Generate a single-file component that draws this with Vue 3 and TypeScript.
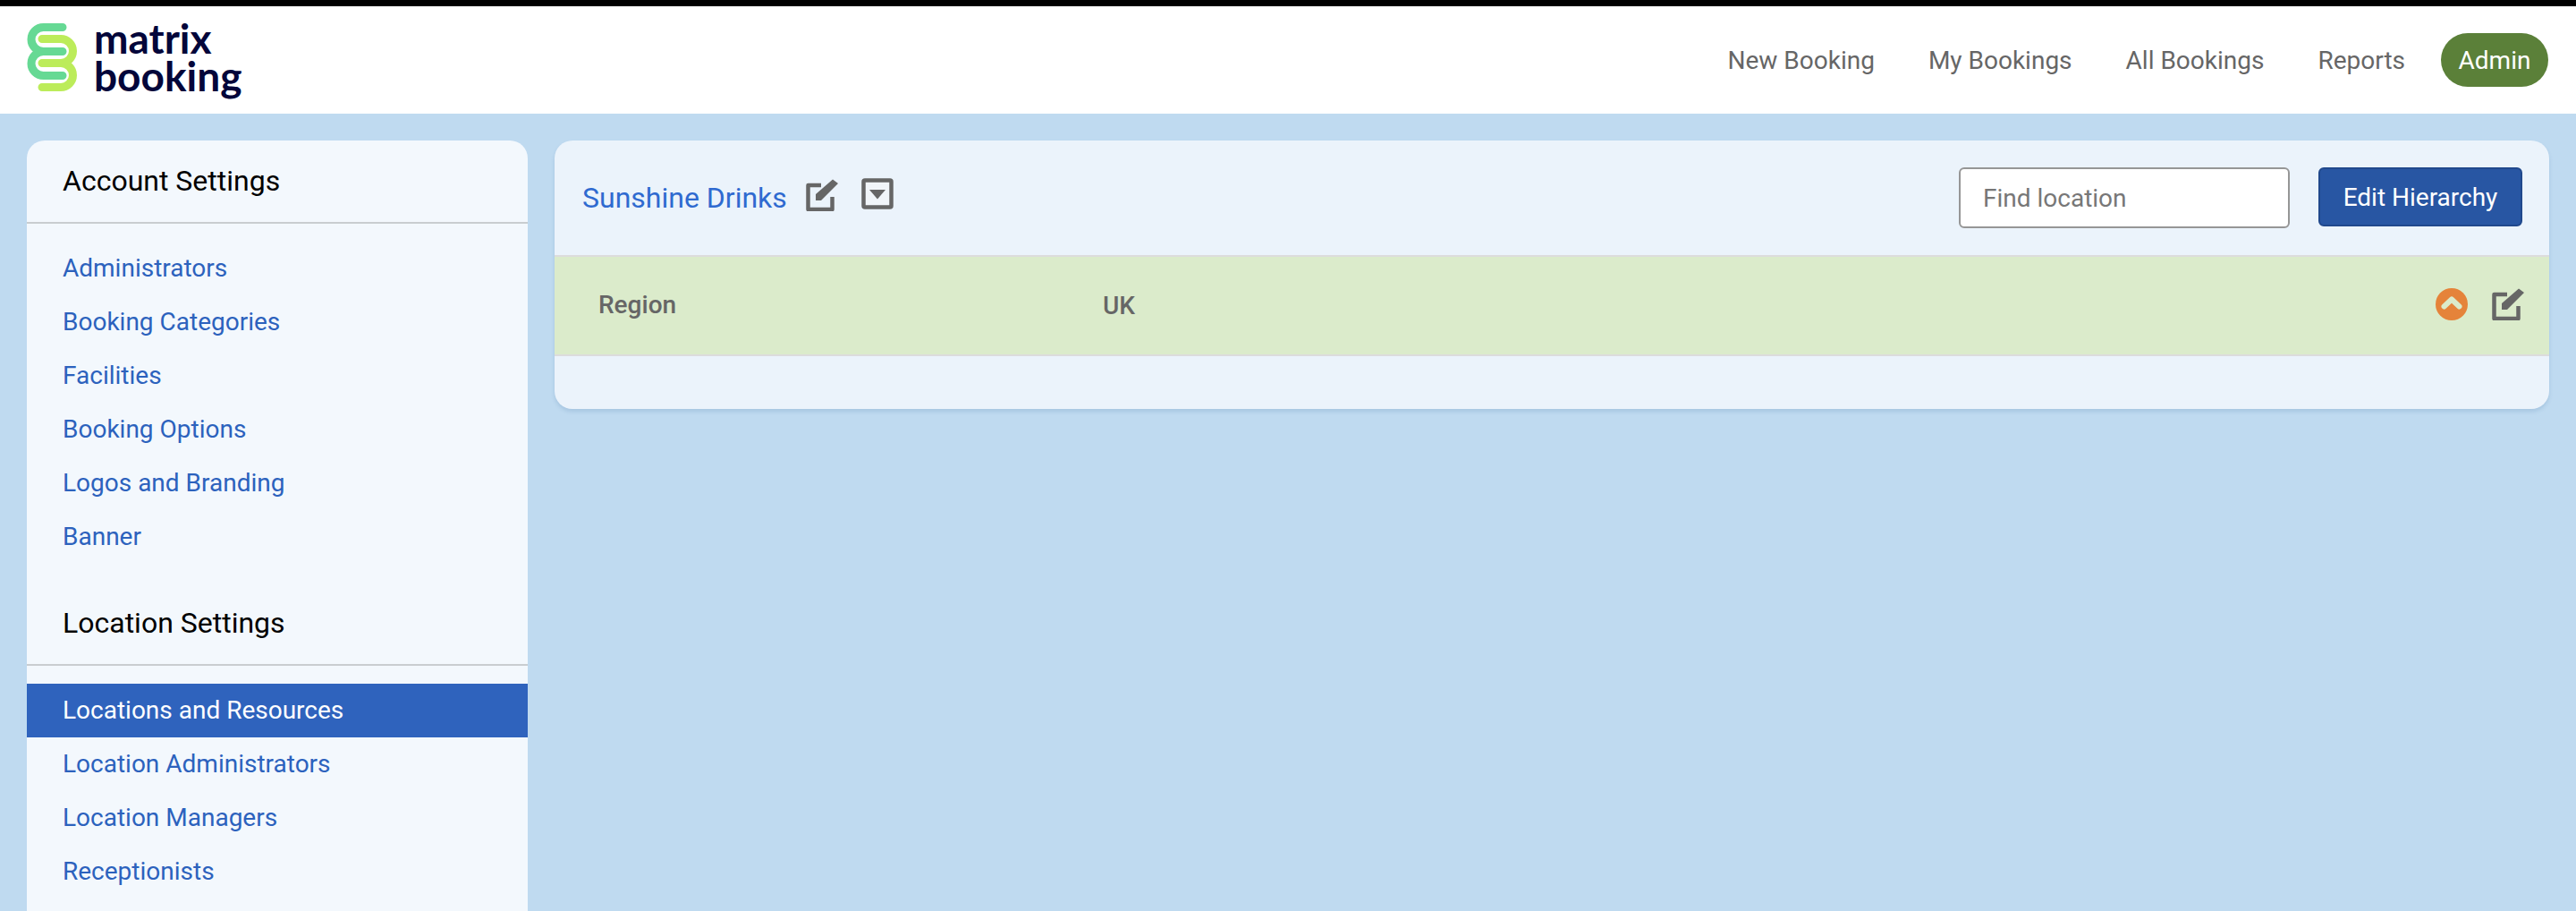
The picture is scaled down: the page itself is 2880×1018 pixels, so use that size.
<script setup lang="ts">
const navItems: string[] = ['New Booking', 'My Bookings', 'All Bookings', 'Reports']
const accountLinks: string[] = ['Administrators', 'Booking Categories', 'Facilities', 'Booking Options', 'Logos and Branding', 'Banner']
const locationLinks: string[] = ['Locations and Resources', 'Location Administrators', 'Location Managers', 'Receptionists', 'Security Groups']
</script>

<template>
  <div class="page">
    <header class="topbar">
      <div class="brand">
        <svg class="mark" width="62" height="80" viewBox="28 26 62 80" fill="none" stroke-width="9" stroke-linecap="round">
          <path stroke="#bcec5a" d="M47 45.5H68a13.5 13.5 0 0 1 0 27H47M68 72.5a13.5 13.5 0 0 1 0 27H47" />
          <path stroke="#66d994" d="M70 32.5H48.5a13.5 13.5 0 0 0 0 27H70M48.5 59.5a13.5 13.5 0 0 0 0 27H70" />
        </svg>
        <div class="wordmark"><span>matrix</span><span>booking</span></div>
      </div>
      <nav class="nav">
        <a v-for="item in navItems" :key="item" class="nav-link">{{ item }}</a>
        <a class="nav-pill">Admin</a>
      </nav>
    </header>

    <div class="content">
      <aside class="sidebar">
        <section class="group">
          <h2 class="group-title">Account Settings</h2>
          <ul class="links">
            <li v-for="l in accountLinks" :key="l" class="link">{{ l }}</li>
          </ul>
        </section>
        <section class="group">
          <h2 class="group-title">Location Settings</h2>
          <ul class="links">
            <li v-for="(l, i) in locationLinks" :key="l" class="link" :class="{ active: i === 0 }">{{ l }}</li>
          </ul>
        </section>
      </aside>

      <main class="panel">
        <div class="panel-head">
          <div class="title-wrap">
            <a class="title">Sunshine Drinks</a>
            <svg class="ico edit-a" width="36" height="36" viewBox="0 0 36 36">
              <path d="M17 7H2.5V34H29.5V20" fill="none" stroke="#666" stroke-width="4.5" stroke-linejoin="round" />
              <path d="M11 24V17L30 0.5L36 5L17 24Z" fill="#666" />
            </svg>
            <svg class="ico caret" width="36" height="36" viewBox="0 0 36 36">
              <rect x="2.5" y="2.5" width="31" height="30" rx="1.5" fill="#f1f5f9" stroke="#666" stroke-width="4.5" />
              <path d="M9 13H27L18 23.5Z" fill="#666" />
            </svg>
          </div>
          <div class="tools">
            <input class="search" type="text" placeholder="Find location" />
            <button class="primary" type="button">Edit Hierarchy</button>
          </div>
        </div>
        <div class="row">
          <span class="row-type">Region</span>
          <span class="row-name">UK</span>
          <div class="row-actions">
            <svg width="36" height="36" viewBox="0 0 36 36">
              <circle cx="18" cy="18" r="18" fill="#e5833a" />
              <path d="M9.5 20.5L18 12.5L26.5 20.5" fill="none" stroke="#dbebcb" stroke-width="6" stroke-linecap="round" stroke-linejoin="round" />
            </svg>
            <svg width="36" height="36" viewBox="0 0 36 36">
              <path d="M17 7H2.5V34H29.5V20" fill="none" stroke="#666" stroke-width="4.5" stroke-linejoin="round" />
              <path d="M11 24V17L30 0.5L36 5L17 24Z" fill="#666" />
            </svg>
          </div>
        </div>
        <div class="panel-foot"></div>
      </main>
    </div>
  </div>
</template>

<style>
html, body { margin: 0; background: #bfdaf0; }
</style>

<style scoped>
.page {
  height: 1018px;
  overflow: hidden;
  background: #bfdaf0;
  font-family: Roboto, "Liberation Sans", sans-serif;
}
.topbar {
  box-sizing: border-box;
  height: 127px;
  border-top: 7px solid #000;
  background: #fff;
  display: flex;
  align-items: center;
  justify-content: space-between;
  padding: 0 31px 0 28px;
}
.brand { display: flex; align-items: center; gap: 15px; }
.mark { display: block; margin-top: -6px; }
.wordmark {
  display: flex;
  flex-direction: column;
  font-family: Lato, sans-serif;
  font-weight: 700;
  font-size: 46px;
  line-height: 42px;
  color: #04063a;
  margin-top: -6px;
}
.nav { display: flex; align-items: center; }
.nav-link {
  font-size: 28px;
  color: #666;
  margin-right: 60px;
}
.nav-pill {
  width: 120px;
  height: 60px;
  border-radius: 30px;
  background: #5b8039;
  color: #fff;
  font-size: 28px;
  display: flex;
  align-items: center;
  justify-content: center;
  margin-left: -20px;
}
.content {
  display: flex;
  align-items: flex-start;
  gap: 30px;
  padding: 30px 30px 0;
}
.sidebar {
  flex: 0 0 560px;
  background: #f3f8fd;
  border-radius: 20px 20px 0 0;
  overflow: hidden;
}
.group + .group { margin-top: 21px; }
.group-title {
  margin: 0;
  box-sizing: border-box;
  height: 93px;
  padding: 0 0 0 40px;
  line-height: 91px;
  font-size: 32px;
  font-weight: 400;
  color: #000;
  border-bottom: 2px solid #c9cdd0;
}
.links { list-style: none; margin: 0; padding: 20px 0 0; }
.link {
  height: 60px;
  line-height: 60px;
  padding-left: 40px;
  font-size: 28px;
  color: #2c62bd;
}
.link.active { background: #2f63bd; color: #fff; }
.panel {
  flex: 1;
  background: #ebf3fb;
  border-radius: 20px;
  overflow: hidden;
  box-shadow: 0 3px 4px rgba(60, 110, 160, 0.18);
}
.panel-head {
  box-sizing: border-box;
  height: 128px;
  display: flex;
  align-items: center;
  justify-content: space-between;
  padding: 0 30px 0 31px;
}
.title-wrap { display: flex; align-items: center; }
.title { font-size: 32px; color: #2f6ad0; margin-top: 0; }
.ico { display: block; }
.edit-a { margin-left: 21px; margin-top: -6px; }
.caret { margin-left: 26px; margin-top: -8px; }
.tools { display: flex; align-items: flex-start; gap: 32px; }
.search {
  box-sizing: border-box;
  width: 370px;
  height: 68px;
  border: 2px solid #969696;
  border-radius: 6px;
  background: #fff;
  padding: 0 25px;
  font: 400 28px Roboto, sans-serif;
  color: #333;
  outline: none;
}
.search::placeholder { color: #777; opacity: 1; }
.primary {
  box-sizing: border-box;
  width: 228px;
  height: 66px;
  border: 2px solid #20488c;
  border-radius: 6px;
  background: #2856a3;
  color: #fff;
  font: 400 28px Roboto, sans-serif;
  padding: 0;
}
.row {
  box-sizing: border-box;
  height: 113px;
  display: flex;
  align-items: center;
  background: #dbebcb;
  border-top: 2px solid #dcdcdc;
  border-bottom: 2px solid #dcdcdc;
  padding: 0 28px 0 49px;
  font-size: 28px;
  color: #666;
}
.row-type { width: 564px; font-weight: 500; margin-top: -2px; }
.row-name { font-weight: 500; }
.row-actions { margin-left: auto; display: flex; gap: 27px; margin-top: -4px; }
.row-actions svg { display: block; }
.panel-foot { height: 59px; }
</style>
